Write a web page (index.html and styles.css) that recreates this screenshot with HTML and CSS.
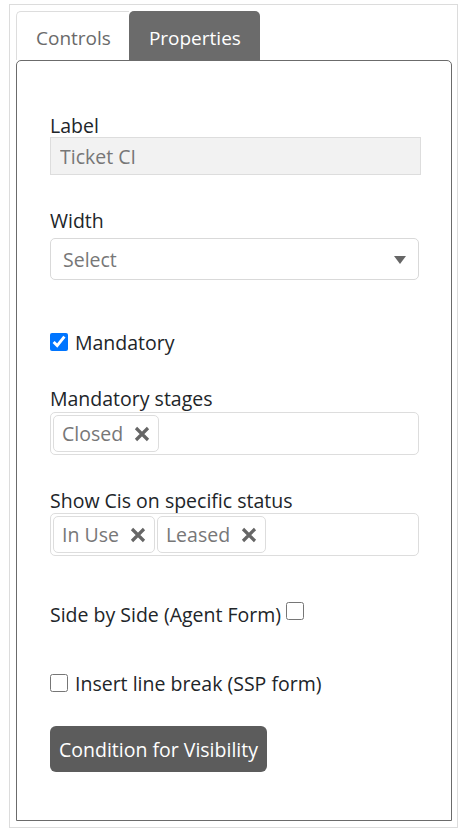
FILE: index.html
```html
<!DOCTYPE html>
<html lang="en">
<head>
    <meta charset="UTF-8">
    <meta name="viewport" content="width=device-width, initial-scale=1.0">
    <title>Field properties</title>
    <link rel="stylesheet" href="styles.css">
</head>
<body>
    <div class="builder">
        <div class="tabs">
            <div class="tab">Controls</div>
            <div class="tab active">Properties</div>
        </div>

        <div class="panel">
            <label class="field-label">Label</label>
            <input class="text-input" type="text" value="Ticket CI" readonly>

            <label class="field-label width-label">Width</label>
            <div class="select-box">
                <span>Select</span>
                <svg class="caret" width="12" height="8" viewBox="0 0 12 8"><path d="M0 0 H12 L6 8 Z" fill="#666"/></svg>
            </div>

            <div class="check-row mandatory">
                <input type="checkbox" checked>
                <span>Mandatory</span>
            </div>

            <label class="field-label stages-label">Mandatory stages</label>
            <div class="tag-box">
                <span class="tag">Closed <svg class="x" width="16" height="16" viewBox="0 0 16 16"><path d="M2 2 L14 14 M14 2 L2 14" stroke="#666" stroke-width="3.2"/></svg></span>
            </div>

            <label class="field-label status-label">Show Cis on specific status</label>
            <div class="tag-box">
                <span class="tag">In Use <svg class="x" width="16" height="16" viewBox="0 0 16 16"><path d="M2 2 L14 14 M14 2 L2 14" stroke="#666" stroke-width="3.2"/></svg></span>
                <span class="tag">Leased <svg class="x" width="16" height="16" viewBox="0 0 16 16"><path d="M2 2 L14 14 M14 2 L2 14" stroke="#666" stroke-width="3.2"/></svg></span>
            </div>

            <div class="check-row side-row">
                <span>Side by Side (Agent Form)</span>
                <input type="checkbox" class="side-check">
            </div>

            <div class="check-row break-row">
                <input type="checkbox">
                <span>Insert line break (SSP form)</span>
            </div>

            <button class="btn-condition">Condition for Visibility</button>
        </div>
    </div>
</body>
</html>
```

FILE: styles.css
```css
body {
    margin: 0;
    font-family: "Open Sans", "Noto Sans", sans-serif;
    font-size: 19.5px;
    color: #212529;
}

.builder {
    box-sizing: border-box;
    width: 449px;
    height: 824px;
    margin: 4px 0 0 9px;
    padding: 6px 5px 6px 6px;
    border: 1px solid #dcdcdc;
    display: flex;
    flex-direction: column;
}

.tabs {
    display: flex;
    font-size: 19px;
}

.tab {
    padding: 15px 18px 10px 19px;
    line-height: 23px;
    color: #6a6a6a;
    border: 1px solid #dddddd;
    border-bottom: none;
    border-right: none;
    border-radius: 5px 0 0 0;
    background: #fff;
}

.tab.active {
    padding: 16px 19px 10px 20px;
    color: #fff;
    background: #6b6b6b;
    border: none;
    border-radius: 5px 5px 0 0;
}

.panel {
    flex: 1;
    border: 1px solid #6b6b6b;
    border-radius: 5px 5px 0 0;
    padding: 53px 32px 0 33px;
}

.field-label {
    display: block;
    line-height: 23px;
}

.text-input {
    box-sizing: border-box;
    display: block;
    width: calc(100% + 2px);
    height: 38px;
    margin: 0;
    padding: 0 9px;
    font: inherit;
    color: #777;
    background: #f2f2f2;
    border: 1px solid #dddddd;
    border-radius: 0;
    outline: none;
}

.width-label {
    margin-top: 34px;
}

.select-box {
    box-sizing: border-box;
    height: 42px;
    margin-top: 6px;
    padding: 0 12px;
    display: flex;
    align-items: center;
    justify-content: space-between;
    color: #777;
    border: 1px solid #d9d9d9;
    border-radius: 5px;
}

.caret {
    margin-top: 1px;
}

.check-row {
    display: flex;
    align-items: flex-start;
    gap: 7px;
    line-height: 23px;
}

.check-row input {
    width: 18px;
    height: 18px;
    margin: 2px 0 0 0;
}

.mandatory {
    margin-top: 51px;
}

.stages-label {
    margin-top: 33px;
    margin-bottom: 2px;
}

.status-label {
    margin-top: 34px;
    margin-bottom: 1px;
}

.tag-box {
    box-sizing: border-box;
    height: 43px;
    padding: 2px;
    display: flex;
    gap: 2px;
    border: 1px solid #dddddd;
    border-radius: 5px;
}

.tag {
    box-sizing: border-box;
    height: 37px;
    padding: 0 8px 0 8px;
    display: flex;
    align-items: center;
    gap: 11px;
    color: #777;
    border: 1px solid #dddddd;
    border-radius: 5px;
}

.side-row {
    margin-top: 47px;
    gap: 5px;
}

.side-row .side-check {
    margin-top: -1px;
}

.break-row {
    margin-top: 46px;
}

.btn-condition {
    margin-top: 31px;
    height: 46px;
    padding: 0 9px;
    font: inherit;
    color: #fff;
    background: #5c5c5c;
    border: none;
    border-radius: 6px;
}
```
